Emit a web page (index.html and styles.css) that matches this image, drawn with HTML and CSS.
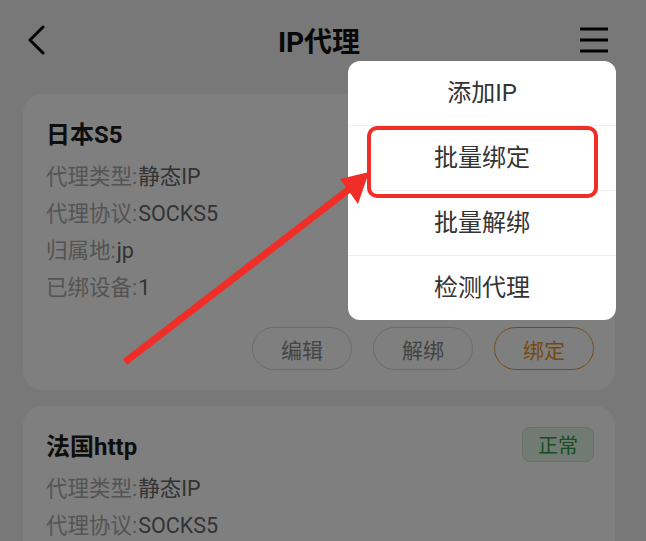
FILE: index.html
```html
<html>
<head>
<meta charset="utf-8">
<link rel="stylesheet" href="styles.css">
</head>
<body>
<div class="page">
    <div class="header">
        <svg class="back" width="20" height="30" viewBox="0 0 20 30">
            <polyline points="16,2 3,15 16,28" fill="none" stroke="#000" stroke-width="3" stroke-linecap="round" stroke-linejoin="round"/>
        </svg>
        <div class="title">IP代理</div>
        <svg class="burger" width="30" height="28" viewBox="0 0 30 28">
            <line x1="1" y1="3" x2="29" y2="3" stroke="#000" stroke-width="3"/>
            <line x1="1" y1="14" x2="29" y2="14" stroke="#000" stroke-width="3"/>
            <line x1="1" y1="25" x2="29" y2="25" stroke="#000" stroke-width="3"/>
        </svg>
    </div>

    <div class="list">
        <div class="card">
            <div class="card-top">
                <div class="card-title">日本S5</div>
                <div class="badge">正常</div>
            </div>
            <div class="rows">
                <div class="row"><span class="label">代理类型:</span><span class="value">静态IP</span></div>
                <div class="row"><span class="label">代理协议:</span><span class="value">SOCKS5</span></div>
                <div class="row"><span class="label">归属地:</span><span class="value">jp</span></div>
                <div class="row"><span class="label">已绑设备:</span><span class="value">1</span></div>
            </div>
            <div class="actions">
                <div class="btn">编辑</div>
                <div class="btn">解绑</div>
                <div class="btn btn-main">绑定</div>
            </div>
        </div>

        <div class="card">
            <div class="card-top">
                <div class="card-title">法国http</div>
                <div class="badge">正常</div>
            </div>
            <div class="rows">
                <div class="row"><span class="label">代理类型:</span><span class="value">静态IP</span></div>
                <div class="row"><span class="label">代理协议:</span><span class="value">SOCKS5</span></div>
            </div>
        </div>
    </div>
</div>

<!-- dim layer behind the dropdown -->
<div class="mask"></div>

<div class="menu">
    <div class="menu-item">添加IP</div>
    <div class="menu-item">批量绑定</div>
    <div class="menu-item">批量解绑</div>
    <div class="menu-item">检测代理</div>
    <div class="mark"></div> <!-- red annotation box -->
</div>

<svg class="arrow" width="646" height="541" viewBox="0 0 646 541">
    <line x1="125" y1="362" x2="352" y2="187" stroke="#f02d26" stroke-width="7"/>
    <polygon points="340,179 369,172 358,204" fill="#f02d26"/>
</svg>
</body>
</html>
```

FILE: styles.css
```css
html, body {
  margin: 0;
  padding: 0;
  height: 100%;
  overflow: hidden;
}

body {
  background-color: #f1f1f1;
  font-family: Roboto, "Noto Sans CJK SC", sans-serif;
}

.page {
  width: 646px;
}

/* top bar */
.header {
  height: 80px;
  display: flex;
  align-items: center;
  justify-content: space-between;
  padding: 0 37px 0 27px;
}

.title {
  font-size: 28px;
  font-weight: bold;
  color: #111;
  margin-left: 12px;
}

/* cards */
.list {
  padding: 14px 31px 0 23px;
}

.card {
  background-color: #fff;
  border-radius: 20px;
  padding: 22px 21px 20px 23px;
  margin-bottom: 16px;
}

.card-top {
  display: flex;
  justify-content: space-between;
  align-items: center;
  height: 32px;
}

.card-title {
  font-size: 24px;
  font-weight: bold;
  color: #1c1c1c;
}

.badge {
  width: 70px;
  height: 33px;
  border: 1px solid #c6e6cb;
  background-color: #e3f4e6;
  color: #2f9a46;
  border-radius: 8px;
  font-size: 20px;
  display: flex;
  align-items: center;
  justify-content: center;
}

.rows {
  margin-top: 10px;
}

.row {
  height: 37px;
  line-height: 37px;
  font-size: 21.5px;
}

.label {
  color: #a8a8a8;
}

.value {
  color: #666;
  margin-left: 1px;
}

.actions {
  display: flex;
  justify-content: flex-end;
  gap: 21px;
  margin-top: 21px;
}

.btn {
  width: 98px;
  height: 41px;
  border: 1px solid #d6d6d6;
  border-radius: 22px;
  color: #888;
  font-size: 21px;
  display: flex;
  align-items: center;
  justify-content: center;
}

.btn-main {
  border-color: #eb9a26;
  color: #e8951f;
}

/* dim layer */
.mask {
  position: fixed;
  left: 0;
  top: 0;
  right: 0;
  bottom: 0;
  background-color: rgba(0, 0, 0, 0.5);
}

/* dropdown */
.menu {
  position: absolute;
  top: 61px;
  right: 30px;
  width: 268px;
  background-color: #fff;
  border-radius: 12px;
}

.menu-item {
  height: 64px;
  line-height: 64px;
  text-align: center;
  font-size: 24px;
  color: #333;
  border-top: 1px solid #eee;
}

.menu-item:first-child {
  border-top: none;
}

.mark {
  position: absolute;
  left: 19px;
  top: 65px;
  width: 223px;
  height: 64px;
  border: 4px solid #f02d26;
  border-radius: 10px;
}

.arrow {
  position: absolute;
  left: 0;
  top: 0;
}
```
